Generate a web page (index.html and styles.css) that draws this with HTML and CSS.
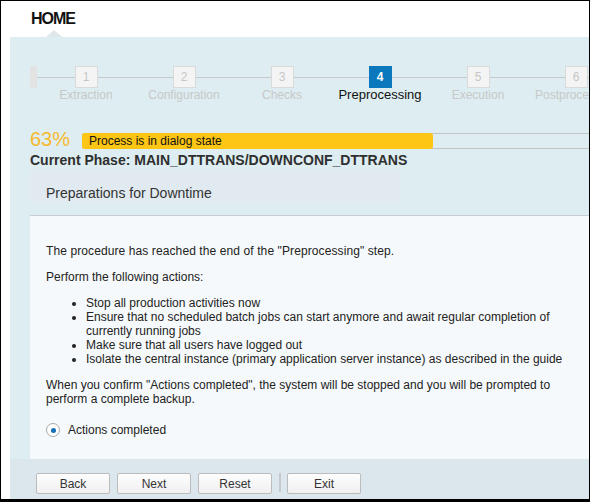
FILE: index.html
```html
<!DOCTYPE html>
<html lang="en">
<head>
    <meta charset="UTF-8">
    <title>Software Update Manager</title>
    <link rel="stylesheet" href="styles.css">
</head>
<body>

    <div class="frame">
        <div class="header">
            <span class="home">HOME</span>
        </div>

        <div class="main">
            <div class="stepper">
                <div class="step-start"></div>
                <div class="step"><div class="step-box">1</div><div class="step-label">Extraction</div></div>
                <div class="step"><div class="step-box">2</div><div class="step-label">Configuration</div></div>
                <div class="step"><div class="step-box">3</div><div class="step-label">Checks</div></div>
                <div class="step active"><div class="step-box">4</div><div class="step-label">Preprocessing</div></div>
                <div class="step"><div class="step-box">5</div><div class="step-label">Execution</div></div>
                <div class="step"><div class="step-box">6</div><div class="step-label">Postprocessing</div></div>
            </div>

            <div class="progress">
                <span class="percent">63%</span>
                <div class="bar">
                    <div class="bar-fill" style="width: 351px;">Process is in dialog state</div>
                </div>
            </div>
            <div class="phase">Current Phase: MAIN_DTTRANS/DOWNCONF_DTTRANS</div>

            <div class="section-title">Preparations for Downtime</div>

            <div class="panel">
                <p class="intro">The procedure has reached the end of the "Preprocessing" step.</p>
                <p>Perform the following actions:</p>
                <ul>
                    <li>Stop all production activities now</li>
                    <li>Ensure that no scheduled batch jobs can start anymore and await regular completion of currently running jobs</li>
                    <li>Make sure that all users have logged out</li>
                    <li>Isolate the central instance (primary application server instance) as described in the guide</li>
                </ul>
                <p>When you confirm "Actions completed", the system will be stopped and you will be prompted to perform a complete backup.</p>
                <label class="radio">
                    <span class="radio-circle"><span class="radio-dot"></span></span>
                    Actions completed
                </label>
            </div>

            <div class="footer">
                <button class="btn">Back</button>
                <button class="btn">Next</button>
                <button class="btn">Reset</button>
                <span class="separator"></span>
                <button class="btn">Exit</button>
            </div>
        </div>
    </div>

</body>
</html>
```

FILE: styles.css
```css
body {
    margin: 0;
    font-family: "Liberation Sans", Arial, sans-serif;
    color: #222222;
}

.frame {
    width: 590px;
    height: 502px;
    box-sizing: border-box;
    border: 1px solid #000000;
    border-bottom-width: 3px;
    background-color: #ffffff;
    overflow: hidden;
}

.header {
    position: relative;
    height: 36px;
    line-height: 36px;
    padding-left: 30px;
}

.home {
    font-size: 16px;
    font-weight: bold;
    letter-spacing: -1px;
    color: #111111;
}

/* small notch under HOME */
.header::after {
    content: "";
    position: absolute;
    left: 45px;
    bottom: 0;
    border-left: 8px solid transparent;
    border-right: 8px solid transparent;
    border-bottom: 7px solid #dfe7ea;
}

.main {
    margin-left: 9px;
    height: 462px;
    background-color: #ddedf1;
    overflow: hidden;
    display: flex;
    flex-direction: column;
}

/* stepper */
.stepper {
    display: flex;
    padding-top: 29px;
    padding-left: 20px;
    white-space: nowrap;
}

.step-start {
    width: 7px;
    height: 22px;
    flex-shrink: 0;
    background-color: #e3e3e3;
}

.step {
    position: relative;
    width: 98px;
    flex-shrink: 0;
    display: flex;
    flex-direction: column;
    align-items: center;
}

.step::before {
    content: "";
    position: absolute;
    left: 0;
    right: 0;
    top: 11px;
    height: 1px;
    background-color: #c9c9c9;
}

.step-box {
    position: relative;
    width: 23px;
    height: 22px;
    box-sizing: border-box;
    border: 1px solid #dadada;
    background-color: #f4f4f4;
    color: #c6c6c6;
    font-size: 12px;
    line-height: 20px;
    text-align: center;
}

.step-label {
    font-size: 12px;
    line-height: 14px;
    color: #c8c8c8;
}

.step.active .step-box {
    background-color: #0b78bd;
    border-color: #0b78bd;
    color: #ffffff;
    font-weight: bold;
}

.step.active .step-label {
    font-size: 13px;
    color: #111111;
}

/* progress */
.progress {
    display: flex;
    align-items: flex-start;
    height: 18px;
    margin-top: 29px;
    padding-left: 20px;
}

.percent {
    width: 52px;
    flex-shrink: 0;
    font-size: 20px;
    line-height: 16px;
    color: #f7b92d;
}

.bar {
    flex: 1;
    height: 16px;
    margin-top: 2px;
    box-sizing: border-box;
    border: 1px solid #c4c4c4;
    border-right: none;
    border-radius: 3px 0 0 3px;
}

.bar-fill {
    height: 16px;
    margin-top: -1px;
    margin-left: -1px;
    padding-left: 7px;
    box-sizing: border-box;
    background-color: #fdc514;
    border-radius: 3px;
    font-size: 12px;
    line-height: 16px;
    color: #111111;
    white-space: nowrap;
}

.phase {
    margin-top: 3px;
    padding-left: 20px;
    font-size: 14px;
    font-weight: bold;
    line-height: 16px;
    color: #2f2f2f;
}

.section-title {
    width: 370px;
    height: 32px;
    margin-top: 2px;
    margin-left: 20px;
    padding-top: 15px;
    padding-left: 16px;
    box-sizing: border-box;
    background-color: #e0eaf0;
    font-size: 14px;
    line-height: 16px;
    color: #333333;
}

/* content panel */
.panel {
    margin-top: 13px;
    margin-left: 20px;
    padding: 28px 0 22px 16px;
    border-top: 1px solid #c8cdd0;
    background-color: #f6f9fb;
    font-size: 12px;
    line-height: 14px;
}

.panel p {
    margin: 0 0 12px 0;
}

.panel .intro {
    letter-spacing: 0.1px;
}

.panel ul {
    margin: 0 0 12px 0;
    padding-left: 40px;
}

.radio {
    display: flex;
    align-items: center;
    gap: 8px;
    margin-top: 17px;
}

.radio-circle {
    width: 14px;
    height: 14px;
    box-sizing: border-box;
    border: 1px solid #a8a8a8;
    border-radius: 50%;
    background-color: #ffffff;
    display: flex;
    align-items: center;
    justify-content: center;
}

.radio-dot {
    width: 5px;
    height: 5px;
    border-radius: 50%;
    background-color: #1670b8;
}

/* buttons */
.footer {
    flex: 1;
    display: flex;
    align-items: flex-start;
    gap: 7px;
    padding-top: 14px;
    padding-left: 26px;
    background-color: #dbe7ed;
}

.btn {
    width: 74px;
    height: 21px;
    padding: 0;
    border: 1px solid #bcbcbc;
    border-radius: 2px;
    background: linear-gradient(#fdfdfd, #f0f0f0);
    font-family: "Liberation Sans", Arial, sans-serif;
    font-size: 12px;
    color: #333333;
}

.separator {
    width: 2px;
    height: 19px;
    margin-right: -1px;
    background-color: #c6c9cb;
}
```
